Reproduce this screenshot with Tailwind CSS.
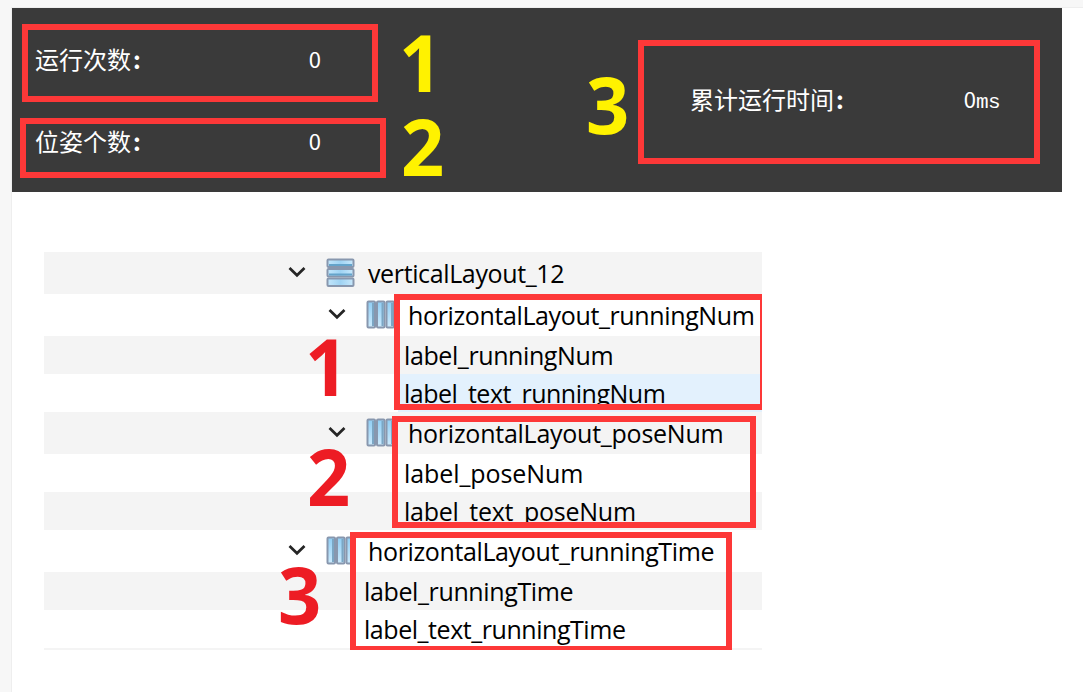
<!DOCTYPE html>
<html lang="zh">
<head>
<meta charset="utf-8">
<title>Layout</title>
<script src="https://cdn.jsdelivr.net/npm/@tailwindcss/browser@4"></script>
</head>
<body class="h-[692px] w-[1083px] overflow-hidden bg-[#f7f7f7] pl-[11px] pt-[7px]">
<svg class="absolute size-0">
  <defs>
    <linearGradient id="g" x1="0" y1="0" x2="1" y2="0"><stop offset="0" stop-color="#c3e6fb"/><stop offset=".5" stop-color="#9fd3f3"/><stop offset="1" stop-color="#c9e8fb"/></linearGradient>
    <linearGradient id="v" x1="0" y1="0" x2="0" y2="1"><stop offset="0" stop-color="#8fcdf4"/><stop offset="1" stop-color="#cdeafc"/></linearGradient>
    <symbol id="cols" viewBox="0 0 30 30"><g fill="url(#v)" stroke="#8897ae" stroke-width="2"><rect x="1.500" y="1.500" width="7.500" height="26" rx="1"/><rect x="11" y="1.500" width="7.500" height="26" rx="1"/><rect x="20.500" y="1.500" width="7.500" height="26" rx="1"/></g><path d="M7 3v23M16.500 3v23M26 3v23" stroke="#7ba6c4" stroke-width="2"/></symbol>
    <symbol id="rows" viewBox="0 0 30 30"><g fill="url(#g)" stroke="#8897ae" stroke-width="2"><rect x="1.500" y="1.500" width="26" height="7.500" rx="1"/><rect x="1.500" y="11" width="26" height="7.500" rx="1"/><rect x="1.500" y="20.500" width="26" height="7.500" rx="1"/></g><path d="M3 7h23M3 16.500h23" stroke="#64a3ca" stroke-width="2"/></symbol>
    <symbol id="chev" viewBox="0 0 18 12"><path d="M1.500 2L9 9.300L16.500 2" fill="none" stroke="#252525" stroke-width="2.700"/></symbol>
  </defs>
</svg>
<main class="h-[685px] border-l border-t border-[#eeeeee] bg-white">
  <section class="relative flex h-[184px] w-[1050px] justify-between bg-[#3a3a3a] text-[24px] leading-[24px] text-white [font-family:'Noto_Sans_CJK_SC',sans-serif]">
    <div class="flex flex-col gap-[58px] pl-[23px] pt-[39px]">
      <div class="flex h-[24px] w-[286px] justify-between"><span>运行次数<span class="ml-[2px] font-bold">:</span></span><span class="text-[22px] leading-[23px]">0</span></div>
      <div class="flex h-[24px] w-[286px] justify-between"><span>位姿个数<span class="ml-[2px] font-bold">:</span></span><span class="text-[22px] leading-[23px]">0</span></div>
    </div>
    <div class="mr-[62px] flex w-[310px] justify-between self-start pt-[79px]"><span>累计运行时间<span class="ml-[2px] font-bold">:</span></span><span class="text-[22px] leading-[23px]">0<span class="text-[21px] tracking-[-0.6px] [font-family:'Liberation_Mono',monospace]">ms</span></span></div>
    <div class="absolute left-[10px] top-[16px] h-[78px] w-[356px] border-6 border-[#fd3838]"></div>
    <div class="absolute left-[8px] top-[110px] h-[60px] w-[366px] border-6 border-[#fd3838]"></div>
    <div class="absolute left-[626px] top-[32px] h-[124px] w-[402px] border-6 border-[#fd3838]"></div>
    <div class="absolute left-[387px] top-[15px] origin-left scale-x-97 text-[78px] font-bold leading-[78px] text-[#fff200] [font-family:'Open_Sans',sans-serif]">1</div>
    <div class="absolute left-[389px] top-[99px] origin-left scale-x-97 text-[78px] font-bold leading-[78px] text-[#fff200] [font-family:'Open_Sans',sans-serif]">2</div>
    <div class="absolute left-[574px] top-[57px] origin-left scale-x-97 text-[78px] font-bold leading-[78px] text-[#fff200] [font-family:'Open_Sans',sans-serif]">3</div>
  </section>
  <section class="relative ml-[32px] mt-[60px] w-[718px] overflow-hidden text-[25px] leading-[43px] tracking-[-0.37px] text-black [font-family:'Open_Sans',sans-serif]">
    <div class="flex h-[42px] bg-[#f4f4f4] pl-[244px]"><svg class="mt-[14px] h-[12px] w-[18px]"><use href="#chev"/></svg><svg class="ml-[20px] mt-[6px] size-[30px]"><use href="#rows"/></svg><span class="ml-[12px]">verticalLayout_12</span></div>
    <div class="flex h-[42px] pl-[284px]"><svg class="mt-[14px] h-[12px] w-[18px]"><use href="#chev"/></svg><svg class="ml-[20px] mt-[6px] size-[30px]"><use href="#cols"/></svg><span class="ml-[12px]">horizontalLayout_runningNum</span></div>
    <div class="h-[38px] bg-[#f4f4f4] pl-[360px] leading-[38px] tracking-[-0.4px]">label_runningNum</div>
    <div class="h-[38px] pl-[354px] leading-[38px] tracking-[-0.48px]"><div class="h-full bg-[#e3f1fd] pl-[6px]">label_text_runningNum</div></div>
    <div class="flex h-[42px] bg-[#f4f4f4] pl-[284px]"><svg class="mt-[14px] h-[12px] w-[18px]"><use href="#chev"/></svg><svg class="ml-[20px] mt-[6px] size-[30px]"><use href="#cols"/></svg><span class="ml-[12px] tracking-[-0.25px]">horizontalLayout_poseNum</span></div>
    <div class="h-[38px] pl-[360px] leading-[38px] tracking-[-0.08px]">label_poseNum</div>
    <div class="h-[38px] bg-[#f4f4f4] pl-[360px] leading-[38px] tracking-[-0.25px]">label_text_poseNum</div>
    <div class="flex h-[42px] pl-[244px]"><svg class="mt-[14px] h-[12px] w-[18px]"><use href="#chev"/></svg><svg class="ml-[20px] mt-[6px] size-[30px]"><use href="#cols"/></svg><span class="ml-[12px]">horizontalLayout_runningTime</span></div>
    <div class="h-[38px] bg-[#f4f4f4] pl-[320px] leading-[38px]">label_runningTime</div>
    <div class="h-[40px] border-b-2 border-[#f4f4f4] pl-[320px] leading-[38px] tracking-[-0.45px]">label_text_runningTime</div>
    <div class="absolute left-[350px] top-[42px] h-[116px] w-[368px] border-6 border-r-2 border-[#fd3838]"></div>
    <div class="absolute left-[348px] top-[164px] h-[112px] w-[364px] border-6 border-[#fd3838]"></div>
    <div class="absolute left-[306px] top-[280px] h-[118px] w-[382px] border-6 border-b-4 border-[#fd3838]"></div>
    <div class="absolute left-[261px] top-[75px] origin-left scale-x-97 text-[78px] font-bold leading-[78px] text-[#ed1c24] [font-family:'Open_Sans',sans-serif]">1</div>
    <div class="absolute left-[263px] top-[185px] origin-left scale-x-97 text-[78px] font-bold leading-[78px] text-[#ed1c24] [font-family:'Open_Sans',sans-serif]">2</div>
    <div class="absolute left-[234px] top-[303px] origin-left scale-x-97 text-[78px] font-bold leading-[78px] text-[#ed1c24] [font-family:'Open_Sans',sans-serif]">3</div>
  </section>
</main>
</body>
</html>
